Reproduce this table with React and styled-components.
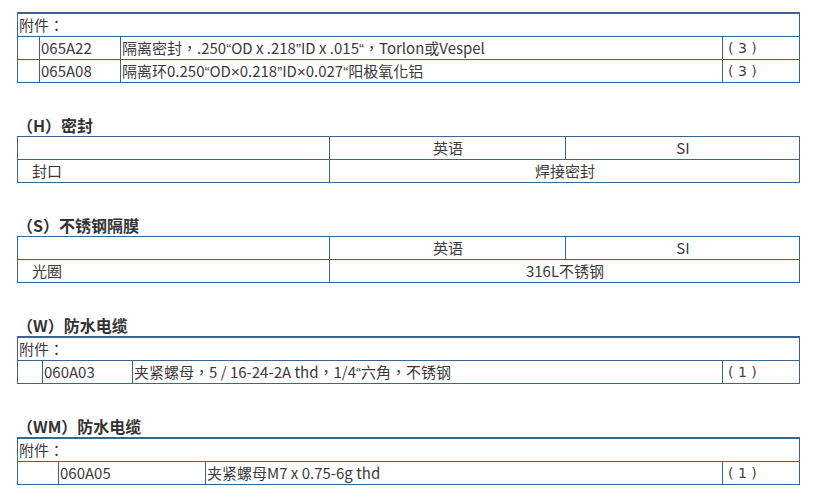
import React from "react";
import styled, { createGlobalStyle } from "styled-components";

const GlobalStyle = createGlobalStyle`
  body {
    margin: 0;
    background: #ffffff;
    font-family: "Noto Sans CJK TC", "Noto Sans", sans-serif;
    color: #333333;
  }
`;

const Page = styled.div`
  padding: 12px 0 0 17px;
  width: 782px;
`;

const Section = styled.section`
  margin-bottom: 31px;
`;

const Heading = styled.h4`
  margin: 0;
  height: 22px;
  line-height: 22px;
  font-size: 16px;
  font-weight: 700;
  color: #333333;
`;

const Table = styled.table`
  width: 782px;
  table-layout: fixed;
  border-collapse: collapse;
  border-top: ${(p) => (p.$thick ? "2px" : "1px")} solid #3b6589;
  font-size: 15px;
  line-height: 22px;
`;

const Cell = styled.td`
  border: 1px solid #3b6589;
  padding: 0 0 0 ${(p) => p.$pad || 1}px;
  height: 22px;
  text-align: ${(p) => (p.$center ? "center" : "left")};
  white-space: nowrap;
  color: #3a3a3a;
`;

const Qty = styled(Cell)`
  padding-left: 5px;
  font-family: "DejaVu Sans", sans-serif;
  font-size: 14px;
  line-height: 22px;
  color: #444444;
`;

// quotes and × set in a Latin face so they stay narrow
const Latin = styled.span`
  font-family: "Liberation Sans", sans-serif;
  line-height: 1;
`;

const Text = ({ children }) =>
  children.split(/([“”×])/).map((part, i) =>
    /^[“”×]$/.test(part) ? <Latin key={i}>{part}</Latin> : part
  );

const AttachmentTable = ({ widths, items }) => (
  <Table $thick>
    <colgroup>
      {widths.map((w, i) => (
        <col key={i} style={{ width: w }} />
      ))}
    </colgroup>
    <tbody>
      <tr>
        <Cell colSpan={4}>附件：</Cell>
      </tr>
      {items.map((it) => (
        <tr key={it.code}>
          <Cell />
          <Cell>{it.code}</Cell>
          <Cell>
            <Text>{it.desc}</Text>
          </Cell>
          <Qty>( {it.qty} )</Qty>
        </tr>
      ))}
    </tbody>
  </Table>
);

const SpecTable = ({ label, value }) => (
  <Table>
    <colgroup>
      <col style={{ width: 312 }} />
      <col style={{ width: 236 }} />
      <col style={{ width: 234 }} />
    </colgroup>
    <tbody>
      <tr>
        <Cell />
        <Cell $center>英语</Cell>
        <Cell $center>SI</Cell>
      </tr>
      <tr>
        <Cell $pad={14}>{label}</Cell>
        <Cell $center colSpan={2}>
          {value}
        </Cell>
      </tr>
    </tbody>
  </Table>
);

export default function App() {
  return (
    <Page>
      <GlobalStyle />
      <Section>
        <AttachmentTable
          widths={[22, 81, 602, 77]}
          items={[
            { code: "065A22", desc: "隔离密封，.250“OD x .218”ID x .015“，Torlon或Vespel", qty: 3 },
            { code: "065A08", desc: "隔离环0.250“OD×0.218”ID×0.027“阳极氧化铝", qty: 3 },
          ]}
        />
      </Section>
      <Section>
        <Heading>（H）密封</Heading>
        <SpecTable label="封口" value="焊接密封" />
      </Section>
      <Section>
        <Heading>（S）不锈钢隔膜</Heading>
        <SpecTable label="光圈" value="316L不锈钢" />
      </Section>
      <Section>
        <Heading>（W）防水电缆</Heading>
        <AttachmentTable
          widths={[25, 90, 590, 77]}
          items={[{ code: "060A03", desc: "夹紧螺母，5 / 16-24-2A thd，1/4“六角，不锈钢", qty: 1 }]}
        />
      </Section>
      <Section>
        <Heading>（WM）防水电缆</Heading>
        <AttachmentTable
          widths={[41, 147, 517, 77]}
          items={[{ code: "060A05", desc: "夹紧螺母M7 x 0.75-6g thd", qty: 1 }]}
        />
      </Section>
    </Page>
  );
}
